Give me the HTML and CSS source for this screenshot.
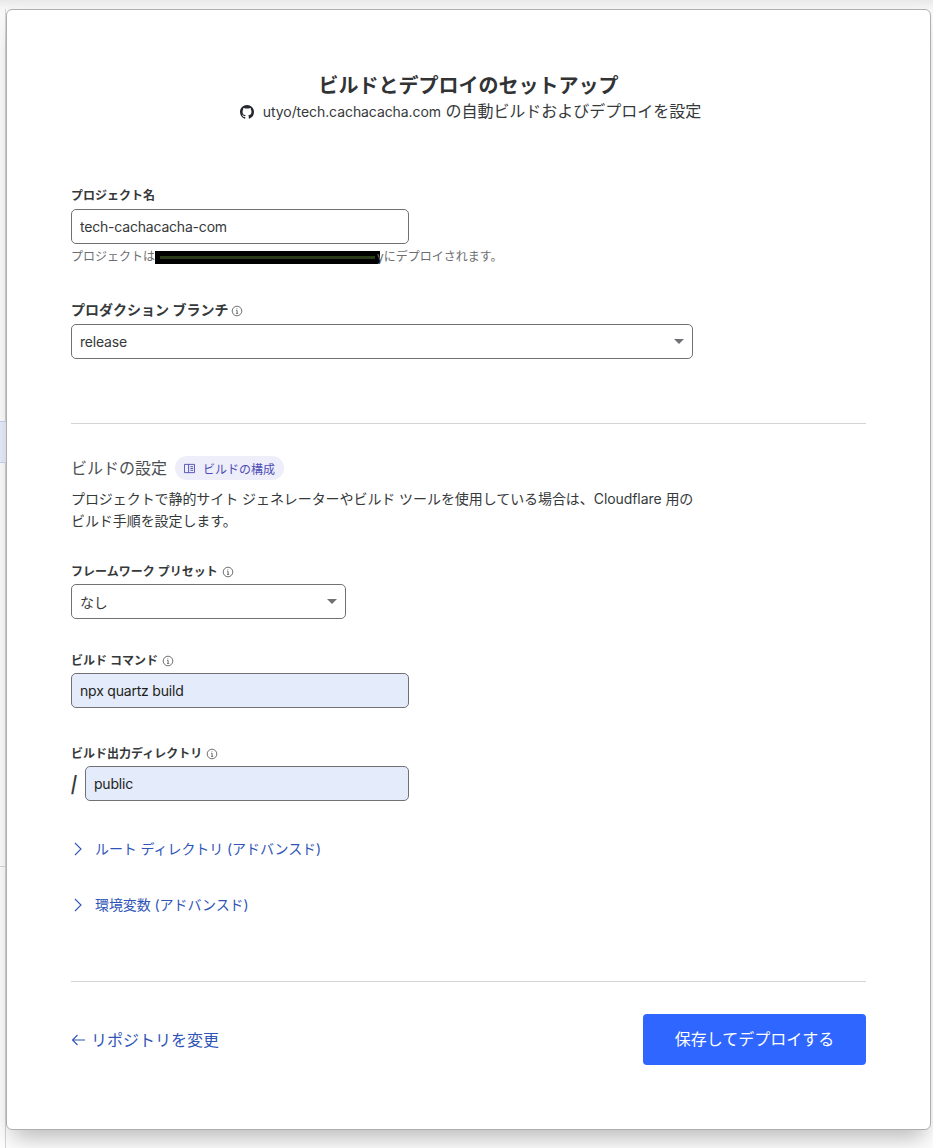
FILE: index.html
```html
<!DOCTYPE html>
<html lang="ja">
<head>
    <meta charset="UTF-8">
    <meta name="viewport" content="width=device-width, initial-scale=1.0">
    <title>ビルドとデプロイのセットアップ</title>
    <link rel="stylesheet" href="styles.css">
</head>
<body>

<!-- Bits of the page behind the modal -->
<div class="behind-edge"></div>
<div class="behind-row"></div>
<div class="behind-line"></div>

<main class="card">
    <header class="head">
        <h1>ビルドとデプロイのセットアップ</h1>
        <p class="sub"><svg class="gh" viewBox="0 0 16 16" aria-hidden="true"><path fill="#24292f" d="M8 0C3.58 0 0 3.58 0 8c0 3.54 2.29 6.53 5.47 7.59.4.07.55-.17.55-.38 0-.19-.01-.82-.01-1.49-2.01.37-2.53-.49-2.69-.94-.09-.23-.48-.94-.82-1.13-.28-.15-.68-.52-.01-.53.63-.01 1.08.58 1.23.82.72 1.21 1.87.87 2.33.66.07-.52.28-.87.51-1.07-1.78-.2-3.64-.89-3.64-3.95 0-.87.31-1.59.82-2.15-.08-.2-.36-1.02.08-2.12 0 0 .67-.21 2.2.82.64-.18 1.32-.27 2-.27.68 0 1.36.09 2 .27 1.53-1.04 2.2-.82 2.2-.82.44 1.1.16 1.92.08 2.12.51.56.82 1.27.82 2.15 0 3.07-1.87 3.75-3.65 3.95.29.25.54.73.54 1.48 0 1.07-.01 1.93-.01 2.2 0 .21.15.46.55.38A8.013 8.013 0 0016 8c0-4.42-3.58-8-8-8z"/></svg><span class="repo">utyo/tech.cachacacha.com</span> の自動ビルドおよびデプロイを設定</p>
    </header>

    <form class="form">
        <div class="field project">
            <label for="projectName">プロジェクト名</label>
            <input class="input w-short" type="text" id="projectName" value="tech-cachacacha-com">
            <p class="help">プロジェクトは<span class="redact"><span class="redact-bar"></span></span>yにデプロイされます。</p>
        </div>

        <div class="field branch">
            <label class="label-big" for="branch">プロダクション ブランチ
                <svg class="info" viewBox="0 0 12 12" aria-hidden="true"><circle cx="6" cy="6" r="4.8"/><path d="M5 5.3h1.1v3M5 8.4h2.2M5.9 3.4v.7"/></svg>
            </label>
            <div class="select w-long"><span>release</span></div>
        </div>

        <hr class="rule rule-top">

        <div class="build-head">
            <h2>ビルドの設定</h2>
            <a class="pill" href="#">
                <svg class="book" viewBox="0 0 12 12" aria-hidden="true"><path d="M.5 1.5h11v9H.5zM5 1.5v9M7 4h3M7 6h3M7 8h3"/></svg>
                ビルドの構成
            </a>
        </div>
        <p class="desc">プロジェクトで静的サイト ジェネレーターやビルド ツールを使用している場合は、Cloudflare 用の<br>ビルド手順を設定します。</p>

        <div class="field preset">
            <label class="label-tight">フレームワーク プリセット
                <svg class="info" viewBox="0 0 12 12" aria-hidden="true"><circle cx="6" cy="6" r="4.8"/><path d="M5 5.3h1.1v3M5 8.4h2.2M5.9 3.4v.7"/></svg>
            </label>
            <div class="select w-mid"><span>なし</span></div>
        </div>

        <div class="field command">
            <label class="label-tight" for="buildCommand">ビルド コマンド
                <svg class="info" viewBox="0 0 12 12" aria-hidden="true"><circle cx="6" cy="6" r="4.8"/><path d="M5 5.3h1.1v3M5 8.4h2.2M5.9 3.4v.7"/></svg>
            </label>
            <input class="input filled w-short" type="text" id="buildCommand" value="npx quartz build">
        </div>

        <div class="field output">
            <label class="label-tight" for="buildOutput">ビルド出力ディレクトリ
                <svg class="info" viewBox="0 0 12 12" aria-hidden="true"><circle cx="6" cy="6" r="4.8"/><path d="M5 5.3h1.1v3M5 8.4h2.2M5.9 3.4v.7"/></svg>
            </label>
            <div class="path-row">
                <span class="slash">/</span>
                <input class="input filled" type="text" id="buildOutput" value="public">
            </div>
        </div>

        <a class="expand expand-root" href="#">
            <svg class="chev" viewBox="0 0 10 14" aria-hidden="true"><path d="M2 1l6 6-6 6"/></svg>
            ルート ディレクトリ (アドバンスド)
        </a>
        <a class="expand expand-env" href="#">
            <svg class="chev" viewBox="0 0 10 14" aria-hidden="true"><path d="M2 1l6 6-6 6"/></svg>
            環境変数 (アドバンスド)
        </a>

        <hr class="rule rule-bottom">

        <div class="actions">
            <a class="back" href="#">
                <svg class="arrow" viewBox="0 0 14 12" aria-hidden="true"><path d="M6.5 1L1.5 6l5 5M1.5 6H14"/></svg>
                <span class="back-text">リポジトリを変更</span>
            </a>
            <button class="primary" type="button">保存してデプロイする</button>
        </div>
    </form>
</main>

</body>
</html>
```

FILE: styles.css
```css
* {
    box-sizing: border-box;
}
html, body {
    height: 100%;
}
body {
    position: relative;
    margin: 0;
    padding: 9px 2px 0 6px;
    overflow: hidden;
    font-family: Inter, "Noto Sans CJK JP", sans-serif;
    color: #36393a;
    background: linear-gradient(#e9e9e9, #f7f7f7 10px, #fff 40px);
}
.behind-edge {
    position: absolute;
    left: 5px;
    top: 9px;
    bottom: 0;
    width: 1px;
    background: #d6d6d6;
}
.behind-row {
    position: absolute;
    left: 0;
    top: 421px;
    width: 6px;
    height: 42px;
    background: #eaf1fd;
    border-top: 1px solid #c6d8f5;
    border-bottom: 1px solid #c6d8f5;
}
.behind-line {
    position: absolute;
    left: 0;
    top: 866px;
    width: 6px;
    height: 1px;
    background: #d9d9d9;
}
.card {
    position: relative;
    height: 1121px;
    padding: 0 64px;
    background: #fff;
    border: 1px solid #aeaeae;
    border-radius: 6px;
    box-shadow: 0 14px 22px -6px rgba(0, 0, 0, 0.28);
}

.head {
    padding-top: 64px;
    text-align: center;
}
h1 {
    margin: 0;
    font-size: 20px;
    line-height: 25px;
    font-weight: 600;
    color: #313335;
}
.sub {
    display: block;
    margin: 0;
    padding-left: 4px;
    font-size: 16px;
    line-height: 24px;
    letter-spacing: -0.02px;
}
.repo {
    font-size: 14px;
    letter-spacing: -0.08px;
}
.gh {
    width: 14px;
    height: 14px;
    margin-right: 9px;
    vertical-align: -2px;
}

.field label {
    display: block;
    margin-bottom: 5px;
    font-size: 12px;
    line-height: 16px;
    font-weight: 600;
    color: #36393a;
}
.field .label-big {
    font-size: 14px;
    line-height: 18px;
    margin-bottom: 5px;
}
.field .label-tight {
    margin-bottom: 4px;
}
.project {
    margin-top: 64px;
}
.branch {
    margin-top: 36px;
}
.preset {
    margin-top: 32px;
}
.command {
    margin-top: 34px;
}
.output {
    margin-top: 38px;
}
.input, .select {
    display: block;
    height: 35px;
    padding: 0 8px;
    border: 1px solid #6f7174;
    border-radius: 5px;
    background: #fff;
    font-family: inherit;
    font-size: 14px;
    letter-spacing: -0.2px;
    color: #36393a;
}
.select {
    position: relative;
    display: flex;
    align-items: center;
}
.select::after {
    content: "";
    position: absolute;
    right: 8px;
    top: 14px;
    border-left: 5px solid transparent;
    border-right: 5px solid transparent;
    border-top: 5px solid #6f7174;
}
.filled {
    background: #e4ebfb;
    color: #1d1f20;
}
.w-short {
    width: 338px;
}
.w-long {
    width: 622px;
}
.w-mid {
    width: 275px;
}
.help {
    margin: 5px 0 0;
    font-size: 12px;
    line-height: 16px;
    color: #6b6e70;
}
.redact {
    display: inline-flex;
    align-items: center;
    width: 225px;
    height: 13px;
    margin-right: -3px;
    padding: 0 5px;
    vertical-align: 2px;
    background: #000;
}
.redact-bar {
    width: 100%;
    height: 3px;
    background: #2a3b17;
}
.info {
    width: 12px;
    height: 12px;
    margin-left: 1px;
    vertical-align: -2px;
    fill: none;
    stroke: #4a4c4e;
    stroke-width: 0.8;
}
.label-big .info {
    margin-left: -1px;
}

.rule {
    margin: 0;
    border: 0;
    border-top: 1px solid #d4d4d4;
}
.rule-top {
    margin-top: 64px;
}
.build-head {
    display: flex;
    align-items: center;
    margin-top: 32px;
}
h2 {
    margin: 0;
    font-size: 16px;
    line-height: 24px;
    font-weight: 400;
    color: #4d5052;
}
.pill {
    display: flex;
    align-items: center;
    height: 24px;
    margin-left: 8px;
    padding: 0 9px;
    border-radius: 12px;
    background: #eeeefa;
    font-size: 12px;
    color: #4d4db5;
    text-decoration: none;
}
.book {
    width: 11px;
    height: 11px;
    margin-right: 8px;
    fill: none;
    stroke: #4d4db5;
    stroke-width: 1;
}
.desc {
    margin: 8px 0 0;
    font-size: 14px;
    line-height: 22px;
    letter-spacing: -0.07px;
    color: #36393a;
}

.path-row {
    display: flex;
    align-items: center;
    width: 338px;
}
.slash {
    width: 14px;
    font-size: 22px;
    font-weight: 700;
    color: #36393a;
    transform: scaleX(0.7);
    transform-origin: left center;
}
.path-row .input {
    flex: 1;
    min-width: 0;
}

.expand {
    display: flex;
    align-items: center;
    font-size: 14px;
    line-height: 20px;
    letter-spacing: -0.08px;
    color: #2f55b8;
    text-decoration: none;
}
.expand-root {
    margin-top: 38px;
}
.expand-env {
    margin-top: 36px;
}
.chev {
    width: 10px;
    height: 14px;
    margin: 0 12px 0 2px;
    fill: none;
    stroke: #2f55b8;
    stroke-width: 1.1;
}
.rule-bottom {
    margin-top: 66px;
}
.actions {
    display: flex;
    justify-content: space-between;
    align-items: center;
    margin-top: 32px;
}
.back {
    display: flex;
    align-items: center;
    font-size: 16px;
    color: #2f55b8;
    text-decoration: none;
}
.back-text {
    margin-bottom: 2px;
}
.arrow {
    width: 14px;
    height: 12px;
    margin: 1px 6px 0 0;
    fill: none;
    stroke: #2f55b8;
    stroke-width: 1.1;
}
.primary {
    width: 223px;
    height: 51px;
    padding: 0 0 3px;
    border: 0;
    border-radius: 4px;
    background: #2e66ff;
    color: #fff;
    font-family: inherit;
    font-size: 16px;
}
```
